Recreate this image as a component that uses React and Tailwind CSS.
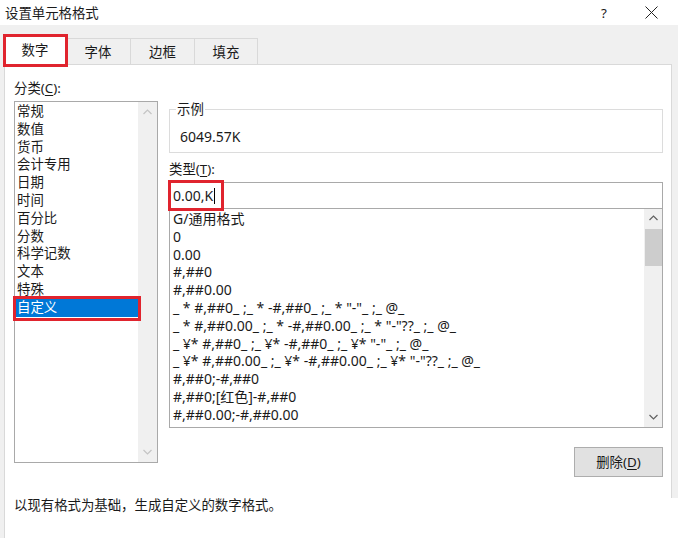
import React from "react";

const FONT = { fontFamily: '"Noto Sans", "Noto Sans CJK SC", sans-serif' };

const categories = ["常规", "数值", "货币", "会计专用", "日期", "时间", "百分比", "分数", "科学记数", "文本", "特殊", "自定义"];
const formats = [
  "G/通用格式",
  "0",
  "0.00",
  "#,##0",
  "#,##0.00",
  '_ * #,##0_ ;_ * -#,##0_ ;_ * "-"_ ;_ @_',
  '_ * #,##0.00_ ;_ * -#,##0.00_ ;_ * "-"??_ ;_ @_',
  '_ ¥* #,##0_ ;_ ¥* -#,##0_ ;_ ¥* "-"_ ;_ @_',
  '_ ¥* #,##0.00_ ;_ ¥* -#,##0.00_ ;_ ¥* "-"??_ ;_ @_',
  "#,##0;-#,##0",
  "#,##0;[红色]-#,##0",
  "#,##0.00;-#,##0.00",
];

function Chevron({ up, color = "#a6a6a6" }) {
  return (
    <svg width="9" height="6" viewBox="0 0 9 6" fill="none">
      {up ? (
        <polyline points="0.5,5 4.5,1 8.5,5" stroke={color} strokeWidth="1.2" />
      ) : (
        <polyline points="0.5,1 4.5,5 8.5,1" stroke={color} strokeWidth="1.2" />
      )}
    </svg>
  );
}

export default function App() {
  return (
    <div className="w-[678px] h-[538px] bg-white overflow-hidden flex flex-col text-[13.4px] text-[#1a1a1a]" style={FONT}>
      {/* title bar */}
      <div className="h-[25px] flex items-center justify-between shrink-0">
        <span className="pl-[5px] leading-[18px]">设置单元格格式</span>
        <div className="flex items-center">
          <span className="w-[12px] text-center leading-[18px]">?</span>
          <span className="ml-[35px] mr-[20px] flex items-center">
            <svg width="13" height="13" viewBox="0 0 13 13">
              <path d="M0.5 0.5 L12.5 12.5 M12.5 0.5 L0.5 12.5" stroke="#222" strokeWidth="1" />
            </svg>
          </span>
        </div>
      </div>

      {/* tab strip */}
      <div className="h-[39px] bg-[#f0f0f0] flex items-end pl-[4px] shrink-0 relative">
        <div className="relative z-10 w-[62px] h-[31px] bg-white border-t border-l border-r border-[#d9d9d9] flex items-center justify-center mb-[-1px]">
          <span className="leading-[18px]">数字</span>
          <div className="absolute left-[-2px] top-[-1px] w-[65px] h-[33px] border-[3px] border-[#e0242e]"></div>
        </div>
        <div className="w-[65px] h-[26px] border-t border-r border-[#d9d9d9] flex items-center justify-center">
          <span className="leading-[18px]">字体</span>
        </div>
        <div className="w-[64px] h-[26px] border-t border-r border-[#d9d9d9] flex items-center justify-center">
          <span className="leading-[18px]">边框</span>
        </div>
        <div className="w-[63px] h-[26px] border-t border-r border-[#d9d9d9] flex items-center justify-center">
          <span className="leading-[18px]">填充</span>
        </div>
      </div>

      {/* body */}
      <div className="flex-1 flex">
        <div className="w-[4px] bg-[#f0f0f0]"></div>
        <div className="flex-1 bg-white border-t border-l border-[#d9d9d9] flex flex-col pl-[9px] pt-[14px]">
          <div className="flex">
            {/* left column */}
            <div className="w-[144px] flex flex-col">
              <div className="leading-[18px]">
                分类(<span className="underline underline-offset-2">C</span>):
              </div>
              <div className="mt-[4px] h-[362px] border border-[#a9a9a9] flex">
                <div className="flex-1 pt-[1px] flex flex-col">
                  {categories.map((c, i) =>
                    i === categories.length - 1 ? (
                      <div key={c} className="relative h-[17.8px] leading-[17.8px] pl-[2px] bg-[#0078d7] text-white">
                        {c}
                        <div className="absolute left-[-2px] top-[-3px] right-[-3px] bottom-[-4px] border-[3px] border-[#e0242e]"></div>
                      </div>
                    ) : (
                      <div key={c} className="h-[17.8px] leading-[17.8px] pl-[2px]">{c}</div>
                    )
                  )}
                </div>
                <div className="w-[19px] bg-[#f0f0f0] flex flex-col items-center justify-between py-[7px]">
                  <Chevron up color="#c4c4c4" />
                  <Chevron color="#c4c4c4" />
                </div>
              </div>
            </div>

            {/* right column */}
            <div className="ml-[11px] w-[494px] flex flex-col">
              <div className="relative mt-[30px] h-[44px] border border-[#dcdcdc] pt-[18px] pl-[10px]">
                <span className="absolute left-[6px] top-[-10px] bg-white px-[1px] leading-[18px]">示例</span>
                <div className="leading-[18px] text-[14px]">6049.57K</div>
              </div>
              <div className="mt-[7px] leading-[18px]">
                类型(<span className="underline underline-offset-2">T</span>):
              </div>
              <div className="relative mt-[4px] h-[27px] border border-[#a9a9a9] flex items-center pl-[3px]">
                <span className="leading-[18px] text-[14px]">0.00,K</span>
                <span className="w-[1px] h-[16px] bg-black ml-[1px]"></span>
                <div className="absolute left-[-2px] top-[-3px] w-[56px] h-[31px] border-[3px] border-[#e0242e]"></div>
              </div>
              <div className="h-[219px] border border-t-0 border-[#a9a9a9] flex">
                <div className="flex-1 pt-[1px] pl-[3px] flex flex-col whitespace-pre text-[14px]">
                  {formats.map((f) => (
                    <div key={f} className="h-[17.8px] leading-[17.8px]">{f}</div>
                  ))}
                </div>
                <div className="w-[18px] bg-[#f0f0f0] flex flex-col items-center pt-[6px] pb-[7px]">
                  <Chevron up color="#606060" />
                  <div className="mt-[8px] w-[17px] h-[37px] bg-[#cdcdcd]"></div>
                  <div className="flex-1"></div>
                  <Chevron color="#606060" />
                </div>
              </div>
              <div className="mt-[19px] flex justify-end">
                <div className="w-[89px] h-[30px] bg-[#e1e1e1] border border-[#adadad] flex items-center justify-center">
                  <span className="leading-[18px]">
                    删除(<span className="underline underline-offset-2">D</span>)
                  </span>
                </div>
              </div>
            </div>
          </div>
          <div className="mt-[19px] leading-[18px]">以现有格式为基础，生成自定义的数字格式。</div>
        </div>
        <div className="w-[7px] flex flex-col">
          <div className="h-[434px] bg-[#f0f0f0] border-l border-[#d9d9d9]"></div>
          <div className="flex-1 bg-white"></div>
        </div>
      </div>
    </div>
  );
}
